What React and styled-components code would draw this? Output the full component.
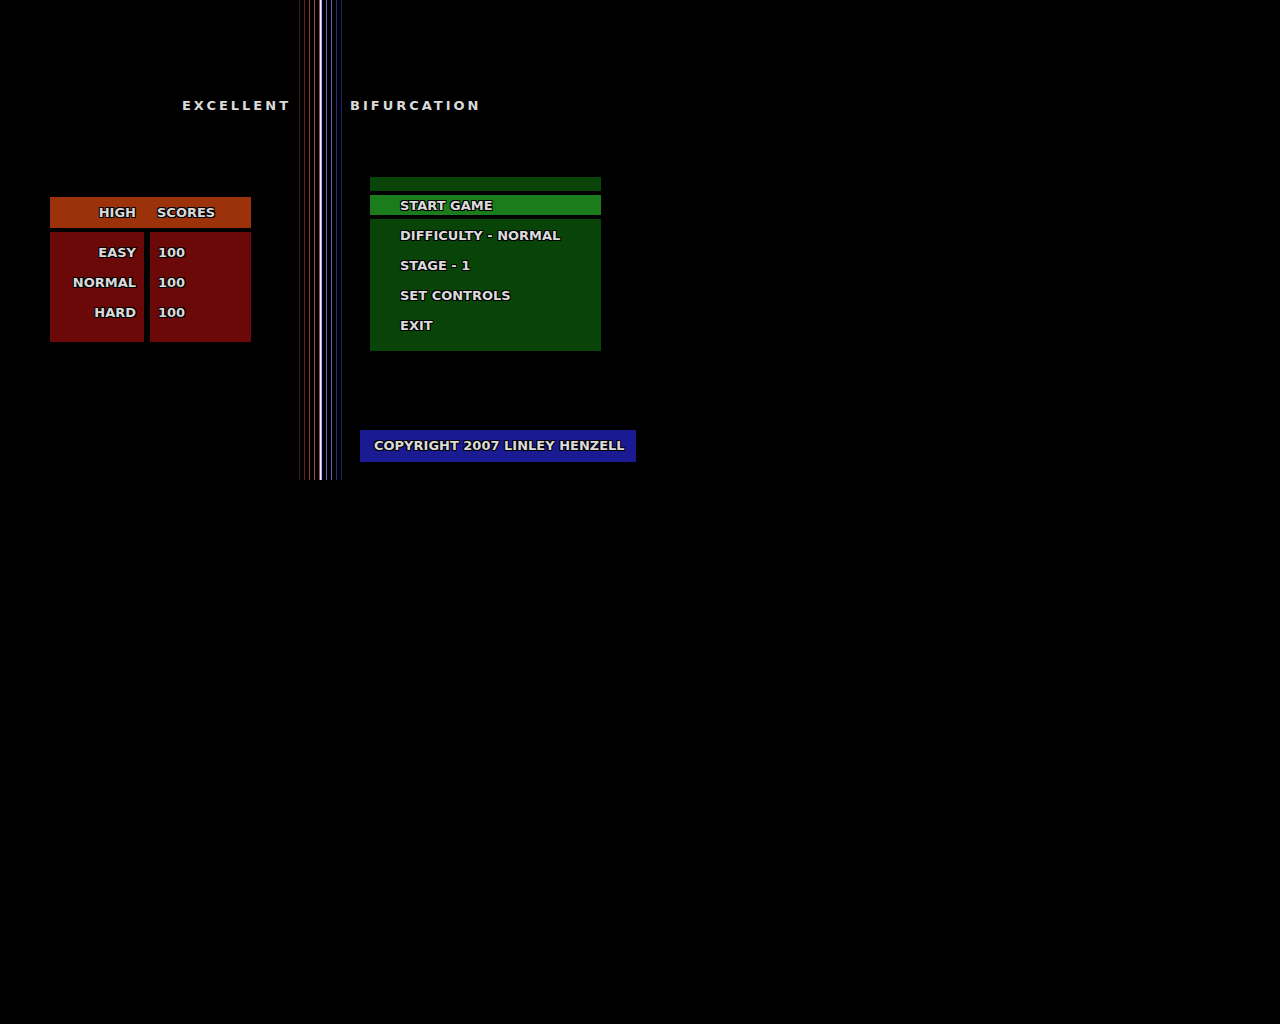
import React, { useState } from "react";
import styled, { createGlobalStyle } from "styled-components";

const GlobalStyle = createGlobalStyle`
  * { box-sizing: border-box; }
  body {
    margin: 0;
    background: #000;
    color: #dadada;
    font: bold 13px/20px "DejaVu Sans", sans-serif;
    text-shadow: 1px 1px 0 #000, -1px 1px 0 #000, 1px -1px 0 #000, -1px -1px 0 #000;
  }
`;

const Screen = styled.main`
  display: grid;
  grid-template-columns: 1fr auto 1fr;
  max-width: 640px;
`;

const Side = styled.section`
  display: flex;
  flex-direction: column;
  padding: 96px 4px 18px 8px;
`;

const Title = styled.h1`
  margin: 0;
  padding-right: 3px;
  font-size: 13px;
  line-height: 20px;
  letter-spacing: 3px;
  text-align: ${(p) => p.$align};
`;

const Beam = styled.div`
  display: flex;
  gap: 4px;
  padding-left: 1px;
`;

const Ray = styled.div`
  width: 1px;
  background: ${(p) => p.$color};
`;

const Core = styled.div`
  width: 3px;
  background: linear-gradient(to right, #a04c70 0 1px, #ffecff 1px 2px, #b4a8ff 2px 3px);
`;

const Scores = styled.table`
  width: 201px;
  margin: 81px 0 0 42px;
  border-spacing: 0;
  table-layout: fixed;
`;

const HeadCell = styled.th`
  width: ${(p) => p.$width};
  padding: ${(p) => (p.$label ? "0 14px 0 0" : "0 0 0 7px")};
  border-bottom: 4px solid #000;
  background: #9b320a;
  line-height: 31px;
  text-align: ${(p) => (p.$label ? "right" : "left")};
`;

const ScoreRow = styled.tr`
  line-height: 30px;
  &:first-child > * { padding-top: 6px; }
  &:last-child > * { padding-bottom: 14px; }
`;

const Level = styled.th`
  padding: 0 8px 0 0;
  border-right: 6px solid #000;
  background: #6b0808;
  text-align: right;
`;

const Score = styled.td`
  padding: 0 0 0 8px;
  background: #6b0808;
`;

const Menu = styled.nav`
  display: flex;
  flex-direction: column;
  gap: 2px;
  width: 231px;
  margin: 61px 0 0 20px;
  padding: 14px 0 12px;
  background: #084408;
`;

const MenuItem = styled.button`
  height: 28px;
  margin: 0;
  padding: 2px 0 0 30px;
  border: solid #000;
  border-width: ${(p) => (p.$selected ? "4px 0" : "0")};
  border-radius: 0;
  outline: 0;
  background: ${(p) => (p.$selected ? "#1a7c1a" : "transparent")};
  color: inherit;
  font: inherit;
  line-height: 18px;
  text-align: left;
  text-shadow: inherit;
`;

const Copyright = styled.footer`
  margin: 79px 0 0 10px;
  padding: 0 0 0 14px;
  background: #1a1a92;
  line-height: 32px;
  white-space: nowrap;
`;

const warmRays = ["#3c1e14", "#642410", "#8c3c28", "#a04830"];
const coolRays = ["#7068b8", "#6464b8", "#2c2c8c", "#202470"];
const scores = [
  ["EASY", 100],
  ["NORMAL", 100],
  ["HARD", 100],
];
const menu = ["START GAME", "DIFFICULTY - NORMAL", "STAGE - 1", "SET CONTROLS", "EXIT"];

export default function App() {
  const [selected, setSelected] = useState(0);

  return (
    <>
      <GlobalStyle />
      <Screen>
        <Side>
          <Title $align="right">EXCELLENT</Title>
          <Scores>
            <thead>
              <tr>
                <HeadCell scope="col" $label $width="100px">HIGH</HeadCell>
                <HeadCell scope="col" $width="101px">SCORES</HeadCell>
              </tr>
            </thead>
            <tbody>
              {scores.map(([level, score]) => (
                <ScoreRow key={level}>
                  <Level scope="row">{level}</Level>
                  <Score>{score}</Score>
                </ScoreRow>
              ))}
            </tbody>
          </Scores>
        </Side>
        <Beam>
          {warmRays.map((color) => <Ray key={color} $color={color} />)}
          <Core />
          {coolRays.map((color) => <Ray key={color} $color={color} />)}
        </Beam>
        <Side>
          <Title as="h2" $align="left">BIFURCATION</Title>
          <Menu>
            {menu.map((label, i) => (
              <MenuItem
                key={label}
                type="button"
                $selected={i === selected}
                onClick={() => setSelected(i)}
              >
                {label}
              </MenuItem>
            ))}
          </Menu>
          <Copyright>COPYRIGHT 2007 LINLEY HENZELL</Copyright>
        </Side>
      </Screen>
    </>
  );
}
